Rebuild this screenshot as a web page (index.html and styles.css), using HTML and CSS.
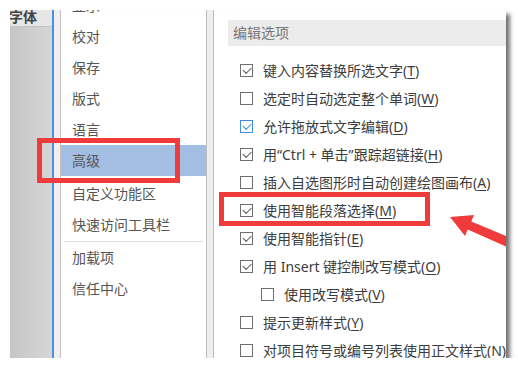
FILE: index.html
```html
<!DOCTYPE html>
<html lang="zh-CN">
<head>
    <meta charset="UTF-8">
    <title>Word 选项 - 高级</title>
    <link rel="stylesheet" href="styles.css">
</head>
<body>
    <div class="shot">
        <div class="side">
            <div class="side-tab">字体</div>
        </div>
        <div class="strip"></div>
        <div class="nav">
            <ul class="nav-list">
                <li>显示</li>
                <li>校对</li>
                <li>保存</li>
                <li>版式</li>
                <li>语言</li>
                <li class="active">高级</li>
                <li class="after-active">自定义功能区</li>
                <li>快速访问工具栏</li>
                <li class="sep"></li>
                <li>加载项</li>
                <li>信任中心</li>
            </ul>
        </div>
        <div class="gutter"></div>
        <div class="main">
            <div class="section-title">编辑选项</div>
            <div class="options">
                <div class="opt"><span class="box on"></span><span>键入内容替换所选文字(<u>T</u>)</span></div>
                <div class="opt"><span class="box"></span><span>选定时自动选定整个单词(<u>W</u>)</span></div>
                <div class="opt"><span class="box on blue"></span><span>允许拖放式文字编辑(<u>D</u>)</span></div>
                <div class="opt"><span class="box on"></span><span>用“Ctrl + 单击”跟踪超链接(<u>H</u>)</span></div>
                <div class="opt"><span class="box"></span><span>插入自选图形时自动创建绘图画布(<u>A</u>)</span></div>
                <div class="opt"><span class="box on"></span><span>使用智能段落选择(<u>M</u>)</span></div>
                <div class="opt"><span class="box on"></span><span>使用智能指针(<u>E</u>)</span></div>
                <div class="opt"><span class="box on"></span><span>用 Insert 键控制改写模式(<u>O</u>)</span></div>
                <div class="opt sub"><span class="box"></span><span>使用改写模式(<u>V</u>)</span></div>
                <div class="opt"><span class="box"></span><span>提示更新样式(<u>Y</u>)</span></div>
                <div class="opt"><span class="box"></span><span>对项目符号或编号列表使用正文样式(<u>N</u>)</span></div>
            </div>
        </div>

        <!-- annotations -->
        <div class="mark mark-nav"></div>
        <div class="mark mark-opt"></div>
        <svg class="arrow" width="496" height="348" viewBox="0 0 496 348">
            <polygon points="440,207 464,205 461.3,211.4 508,231 504,240 457.7,219.6 455,226" fill="#ef3b3b"/>
        </svg>
    </div>
</body>
</html>
```

FILE: styles.css
```css
* {
    margin: 0;
    padding: 0;
    box-sizing: border-box;
}

body {
    background: #fff;
    font-family: 'Noto Sans', 'Noto Sans CJK SC', sans-serif;
    font-size: 14px;
}

.shot {
    position: relative;
    margin: 10px 0 0 10px;
    width: 496px;
    height: 348px;
    display: flex;
    overflow: hidden;
    box-shadow: 4px 4px 4px rgba(0, 0, 0, 0.55);
}

.side {
    width: 44px;
    border-right: 2px solid #4a92e0;
    background: linear-gradient(to right, #c6c6c6, #d6d6d6);
}

.side-tab {
    height: 17px;
    line-height: 14px;
    background: #e6e6e6;
    border-bottom: 1px solid #c4c4c4;
    color: #444;
    font-weight: bold;
    text-indent: -1px;
    white-space: nowrap;
    overflow: hidden;
}

.strip {
    width: 7px;
    background: #efefef;
    border-right: 1px solid #c2c2c2;
}

.nav {
    width: 146px;
    background: #fff;
    border-right: 1px solid #bdbdbd;
    overflow: hidden;
}

.nav-list {
    list-style: none;
    margin-top: -20px;
}

.nav-list li {
    height: 31px;
    line-height: 31px;
    padding-left: 11px;
    color: #555;
    white-space: nowrap;
}

.nav-list li.active {
    background: #a4bde3;
}

.nav-list li.after-active {
    margin-top: 2px;
}

.nav-list li.sep {
    height: 1px;
    margin: 1px 3px 0 3px;
    background: #dedede;
}

.gutter {
    width: 7px;
    background: #eeeeee;
    border-right: 1px solid #bdbdbd;
}

.main {
    flex: 1;
    background: #fff;
    padding-top: 10px;
    overflow: hidden;
}

.section-title {
    margin-left: 14px;
    height: 26px;
    line-height: 26px;
    padding-left: 5px;
    background: #ececec;
    color: #777;
}

.options {
    margin-top: 10px;
    padding-left: 26px;
}

.opt {
    height: 28px;
    display: flex;
    align-items: center;
    gap: 10px;
    color: #3c3c3c;
    white-space: nowrap;
}

.opt.sub {
    padding-left: 21px;
}

.opt u {
    text-underline-offset: 2px;
}

.box {
    position: relative;
    flex: none;
    width: 13px;
    height: 13px;
    border: 1px solid #6e6e6e;
    background: #fff;
}

.box.blue {
    border-color: #3d8ee0;
}

.box.on::after {
    content: '';
    position: absolute;
    left: 2px;
    top: 2px;
    width: 7px;
    height: 3.5px;
    border-left: 1.2px solid #555;
    border-bottom: 1.2px solid #555;
    transform: rotate(-45deg);
}

.box.blue::after {
    border-color: #3d8ee0;
}

.mark {
    position: absolute;
    border: 5px solid #ef3b3b;
}

.mark-nav {
    left: 27px;
    top: 128px;
    width: 143px;
    height: 45px;
}

.mark-opt {
    left: 209px;
    top: 182px;
    width: 211px;
    height: 34px;
}

.arrow {
    position: absolute;
    left: 0;
    top: 0;
}
```
